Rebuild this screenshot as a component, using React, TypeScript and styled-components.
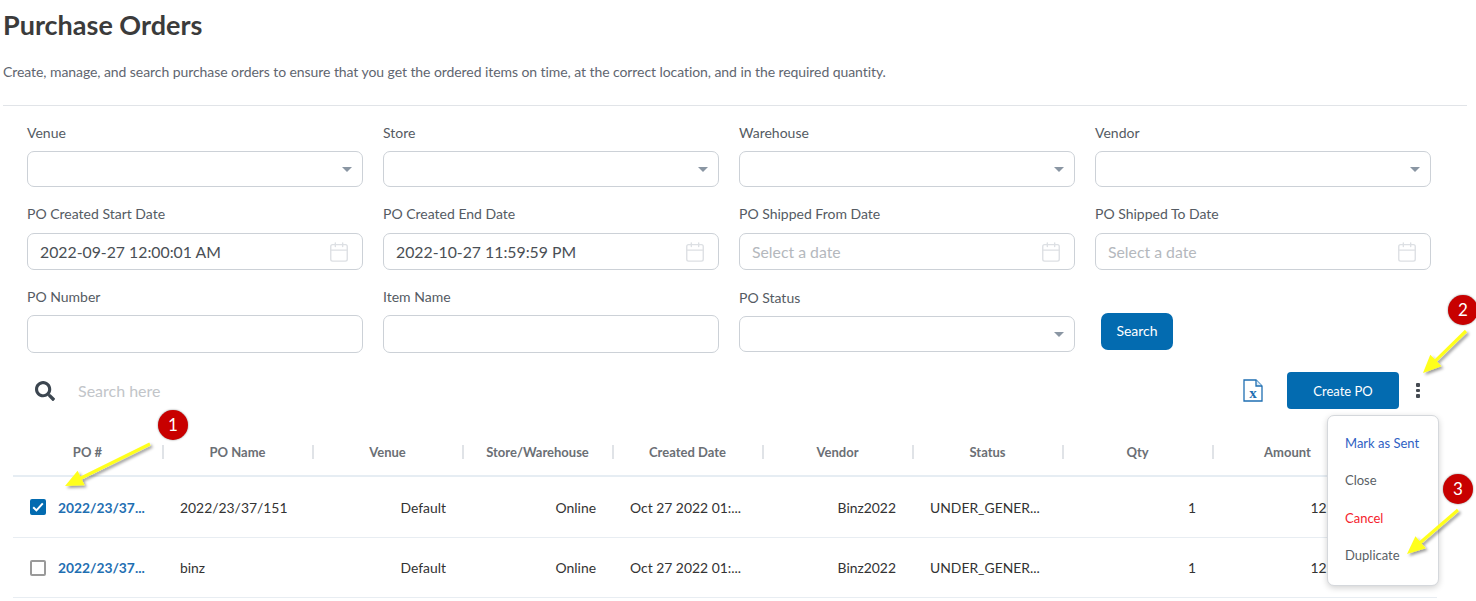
import React from 'react'
import styled, { createGlobalStyle } from 'styled-components'
import { Calendar } from 'lucide-react'
import { FaSearch } from 'react-icons/fa'

const GlobalStyle = createGlobalStyle`
  html, body {
    margin: 0;
    padding: 0;
    background: #fff;
    overflow: hidden;
  }
  body {
    font-family: Lato, "Liberation Sans", sans-serif;
    color: #333;
  }
`

type Field = {
  label: string,
  kind: 'select' | 'date' | 'text',
  value?: string,
  placeholder?: string,
  nudge?: boolean
}

const firstRows: Field[][] = [
  [
    { label: 'Venue', kind: 'select' },
    { label: 'Store', kind: 'select' },
    { label: 'Warehouse', kind: 'select' },
    { label: 'Vendor', kind: 'select' }
  ],
  [
    { label: 'PO Created Start Date', kind: 'date', value: '2022-09-27 12:00:01 AM' },
    { label: 'PO Created End Date', kind: 'date', value: '2022-10-27 11:59:59 PM' },
    { label: 'PO Shipped From Date', kind: 'date', placeholder: 'Select a date' },
    { label: 'PO Shipped To Date', kind: 'date', placeholder: 'Select a date' }
  ],
  [
    { label: 'PO Number', kind: 'text' },
    { label: 'Item Name', kind: 'text' },
    { label: 'PO Status', kind: 'select', nudge: true }
  ]
]

const columns: string[] = ['PO #', 'PO Name', 'Venue', 'Store/Warehouse', 'Created Date', 'Vendor', 'Status', 'Qty', 'Amount']

const rows = [
  { checked: true, po: '2022/23/37...', name: '2022/23/37/151' },
  { checked: false, po: '2022/23/37...', name: 'binz' }
]

const arrows = [
  { x1: 150, y1: 444, x2: 65, y2: 486 },
  { x1: 1466, y1: 331, x2: 1423, y2: 373 },
  { x1: 1458, y1: 510, x2: 1407, y2: 554 }
]

const arrowPoints = (a: { x1: number, y1: number, x2: number, y2: number }) => {
  const len = Math.hypot(a.x2 - a.x1, a.y2 - a.y1)
  const ux = (a.x2 - a.x1) / len
  const uy = (a.y2 - a.y1) / len
  const px = -uy
  const py = ux
  const bx = a.x2 - ux * 18
  const by = a.y2 - uy * 18
  const pts = [
    [a.x1 - px * 1.6, a.y1 - py * 1.6],
    [bx - px * 1.6, by - py * 1.6],
    [bx - px * 8, by - py * 8],
    [a.x2, a.y2],
    [bx + px * 8, by + py * 8],
    [bx + px * 1.6, by + py * 1.6],
    [a.x1 + px * 1.6, a.y1 + py * 1.6]
  ]
  return pts.map(p => p.join(',')).join(' ')
}

const App = () => {
  const renderField = (field: Field) => (
    <FieldBox key={field.label} $nudge={field.nudge}>
      <FieldLabel>{field.label}</FieldLabel>
      {field.kind === 'select' && (
        <SelectBox>
          <Caret />
        </SelectBox>
      )}
      {field.kind === 'date' && (
        <DateBox>
          {field.value ? <DateValue>{field.value}</DateValue> : <DatePlaceholder>{field.placeholder}</DatePlaceholder>}
          <Calendar size={22} color="#dde0e4" strokeWidth={1.5} />
        </DateBox>
      )}
      {field.kind === 'text' && <TextBox />}
    </FieldBox>
  )

  return (
    <Page>
      <GlobalStyle />
      <Title>Purchase Orders</Title>
      <Description>
        Create, manage, and search purchase orders to ensure that you get the ordered items on time, at the correct location, and in the required quantity.
      </Description>
      <Divider />
      <Filters>
        {firstRows.map((fields, index) => (
          <FilterRow key={index}>
            {fields.map(renderField)}
            {index === 2 && <SearchButton>Search</SearchButton>}
          </FilterRow>
        ))}
      </Filters>
      <Toolbar>
        <SearchArea>
          <FaSearch size={20} color="#3c4650" />
          <SearchPlaceholder>Search here</SearchPlaceholder>
        </SearchArea>
        <ToolbarActions>
          <svg width="20" height="23" viewBox="0 0 20 23" fill="none">
            <path d="M1 1h12l6 6v15H1z" stroke="#1f6fb2" strokeWidth="1.3" fill="#fff" />
            <path d="M13 1v6h6" stroke="#1f6fb2" strokeWidth="1.3" fill="#dcebf6" />
            <text x="10" y="19" textAnchor="middle" fontFamily="Liberation Serif, serif" fontWeight="700" fontSize="15" fill="#1f6fb2">x</text>
          </svg>
          <CreateButton>Create PO</CreateButton>
          <Kebab>
            <KebabDot />
            <KebabDot />
            <KebabDot />
          </Kebab>
        </ToolbarActions>
      </Toolbar>
      <Table>
        <HeaderRow>
          {columns.map(col => <HeaderCell key={col}>{col}</HeaderCell>)}
        </HeaderRow>
        {rows.map((row, index) => (
          <BodyRow key={index} $last={index === rows.length - 1}>
            <PoCell>
              <CheckBox $checked={row.checked}>
                {row.checked && (
                  <svg width="12" height="10" viewBox="0 0 12 10" fill="none">
                    <path d="M1.2 5.2l3.2 3.2 6.4-7" stroke="#fff" strokeWidth="2" />
                  </svg>
                )}
              </CheckBox>
              <PoLink>{row.po}</PoLink>
            </PoCell>
            <Cell>{row.name}</Cell>
            <Cell $right>Default</Cell>
            <Cell $right>Online</Cell>
            <Cell>Oct 27 2022 01:...</Cell>
            <Cell $right>Binz2022</Cell>
            <Cell>UNDER_GENER...</Cell>
            <Cell $right>1</Cell>
            <Cell $right>12.00</Cell>
          </BodyRow>
        ))}
      </Table>
      <Menu>
        <MenuItem $color="#2f5fc4">Mark as Sent</MenuItem>
        <MenuItem>Close</MenuItem>
        <MenuItem $color="#f5222d">Cancel</MenuItem>
        <MenuItem>Duplicate</MenuItem>
      </Menu>
      <ArrowLayer width="1476" height="601" viewBox="0 0 1476 601">
        <defs>
          <filter id="arrowShadow" x="-20%" y="-20%" width="150%" height="150%">
            <feDropShadow dx="2" dy="2" stdDeviation="1.5" floodColor="#000" floodOpacity="0.4" />
          </filter>
        </defs>
        {arrows.map((a, i) => (
          <polygon key={i} points={arrowPoints(a)} fill="#ffff1e" filter="url(#arrowShadow)" />
        ))}
      </ArrowLayer>
      <Badge $x={158} $y={410}>1</Badge>
      <Badge $x={1448} $y={295}>2</Badge>
      <Badge $x={1443} $y={474}>3</Badge>
    </Page>
  )
}

const Page = styled.div`
  position: relative;
  width: 1476px;
  height: 601px;
  overflow: hidden;
  padding-left: 3px;
  box-sizing: border-box;
`

const Title = styled.h1`
  margin: 0;
  padding-top: 9px;
  font-size: 27px;
  line-height: 32px;
  font-weight: 700;
  color: #3b3b3b;
`

const Description = styled.p`
  margin: 22px 0 0;
  font-size: 14px;
  line-height: 18px;
  letter-spacing: -0.07px;
  color: #5f6670;
`

const Divider = styled.div`
  width: 1464px;
  height: 1px;
  margin-top: 24px;
  background: #e1e4e8;
`

const Filters = styled.div`
  display: grid;
  grid-template-rows: 81px 83px 82px;
  padding-left: 24px;
  padding-top: 18px;
`

const FilterRow = styled.div`
  display: flex;
  gap: 20px;
`

const FieldBox = styled.div<{ $nudge?: boolean }>`
  width: 336px;
  display: flex;
  flex-direction: column;
  padding-top: ${({ $nudge }) => ($nudge ? '1px' : '0')};
`

const FieldLabel = styled.label`
  font-size: 14px;
  line-height: 18px;
  margin-bottom: 9px;
  color: #555b63;
`

const SelectBox = styled.div`
  height: 36px;
  box-sizing: border-box;
  border: 1px solid #ccd1d7;
  border-radius: 7px;
  display: flex;
  align-items: center;
  justify-content: flex-end;
  padding-right: 10px;
`

const Caret = styled.span`
  width: 0;
  height: 0;
  border-left: 5px solid transparent;
  border-right: 5px solid transparent;
  border-top: 5px solid #8a96a3;
`

const DateBox = styled.div`
  height: 37px;
  margin-top: 1px;
  box-sizing: border-box;
  border: 1px solid #ccd1d7;
  border-radius: 7px;
  display: flex;
  align-items: center;
  justify-content: space-between;
  padding: 0 12px;
`

const DateValue = styled.span`
  font-size: 15.8px;
  color: #4a4f55;
`

const DatePlaceholder = styled.span`
  font-size: 15.8px;
  color: #b4b8bd;
`

const TextBox = styled.div`
  height: 38px;
  box-sizing: border-box;
  border: 1px solid #ccd1d7;
  border-radius: 7px;
`

const SearchButton = styled.button`
  align-self: flex-start;
  margin: 25px 0 0 6px;
  width: 72px;
  height: 37px;
  padding: 0 0 2px;
  border: 0;
  border-radius: 7px;
  background: #036bb0;
  color: #fff;
  font-family: inherit;
  font-size: 14px;
`

const Toolbar = styled.div`
  display: flex;
  align-items: center;
  justify-content: space-between;
  height: 37px;
  margin-top: 2px;
  padding-left: 32px;
`

const SearchArea = styled.div`
  display: flex;
  align-items: center;
  gap: 23px;
`

const SearchPlaceholder = styled.span`
  font-size: 16px;
  color: #c2c5c9;
`

const ToolbarActions = styled.div`
  display: flex;
  align-items: center;
  padding-right: 56px;
`

const CreateButton = styled.button`
  width: 112px;
  height: 37px;
  margin-left: 24px;
  border: 0;
  border-radius: 4px;
  background: #036bb0;
  color: #fff;
  font-family: inherit;
  font-size: 13px;
`

const Kebab = styled.div`
  display: flex;
  flex-direction: column;
  gap: 2px;
  margin-left: 17px;
  width: 4px;
`

const KebabDot = styled.span`
  width: 4px;
  height: 3.5px;
  border-radius: 1px;
  background: #454b52;
`

const Table = styled.div`
  width: 1424px;
  margin: 19px 0 0 10px;
`

const HeaderRow = styled.div`
  display: grid;
  grid-template-columns: repeat(9, 150px) 1fr;
  height: 49px;
  box-sizing: border-box;
  align-items: center;
  border-bottom: 2px solid #e6edf3;
  padding-top: 1px;
`

const HeaderCell = styled.div`
  height: 14px;
  line-height: 14px;
  margin-right: -1px;
  text-align: center;
  font-size: 13px;
  font-weight: 700;
  color: #6b6f75;
  border-right: 2px solid #e0e3e7;
  box-sizing: border-box;
`

const BodyRow = styled.div<{ $last: boolean }>`
  display: grid;
  grid-template-columns: repeat(9, 150px) 1fr;
  height: ${({ $last }) => ($last ? '60px' : '61px')};
  box-sizing: border-box;
  align-items: center;
  border-bottom: 1px solid #e8edf2;
`

const PoCell = styled.div`
  display: flex;
  align-items: center;
  padding-left: 17px;
  gap: 12px;
`

const CheckBox = styled.span<{ $checked: boolean }>`
  width: 16px;
  height: 16px;
  box-sizing: border-box;
  display: flex;
  align-items: center;
  justify-content: center;
  border-radius: 2px;
  background: ${({ $checked }) => ($checked ? '#036bb0' : '#fff')};
  border: 2px solid ${({ $checked }) => ($checked ? '#036bb0' : '#9a9a9a')};
`

const PoLink = styled.span`
  font-size: 13.8px;
  font-weight: 700;
  color: #1f6fb2;
`

const Cell = styled.div<{ $right?: boolean }>`
  font-size: 13.9px;
  color: #333;
  padding: 0 17px;
  text-align: ${({ $right }) => ($right ? 'right' : 'left')};
  white-space: nowrap;
`

const Menu = styled.div`
  position: absolute;
  left: 1327px;
  top: 415px;
  width: 112px;
  height: 171px;
  box-sizing: border-box;
  padding: 18px 0 0 17px;
  background: #fff;
  border: 1px solid #d5d8dc;
  border-radius: 7px;
  box-shadow: 0 2px 6px rgba(0, 0, 0, 0.18);
  display: flex;
  flex-direction: column;
  gap: 19.3px;
`

const MenuItem = styled.div<{ $color?: string }>`
  font-size: 13px;
  line-height: 18px;
  color: ${({ $color }) => $color || '#5a5f66'};
`

const ArrowLayer = styled.svg`
  position: absolute;
  left: 0;
  top: 0;
  pointer-events: none;
`

const Badge = styled.div<{ $x: number, $y: number }>`
  position: absolute;
  left: ${({ $x }) => $x}px;
  top: ${({ $y }) => $y}px;
  width: 30px;
  height: 30px;
  border-radius: 50%;
  background: #c80000;
  box-shadow: 0 0 2px rgba(0, 0, 0, 0.5);
  color: #fff;
  font-size: 17px;
  line-height: 30px;
  text-align: center;
`

export default App
